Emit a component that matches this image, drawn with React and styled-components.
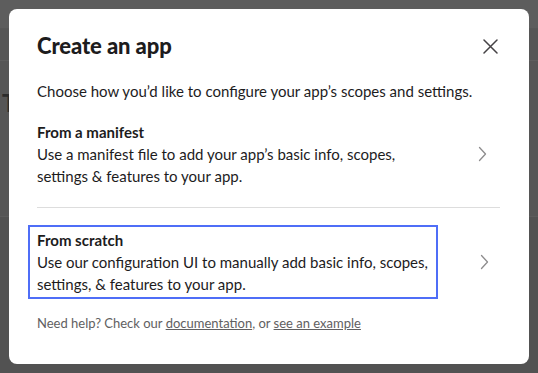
import styled, { createGlobalStyle } from 'styled-components'

const GlobalStyle = createGlobalStyle`
  html, body {
    margin: 0;
    padding: 0;
  }
  body {
    width: 538px;
    height: 373px;
    overflow: hidden;
    font-family: Lato, "Liberation Sans", sans-serif;
    -webkit-font-smoothing: antialiased;
  }
`

// BACKDROP (the dimmed page behind the dialog)

const Page = styled.div`
  position: relative;
  width: 538px;
  height: 373px;
  background: #4f4f4f;
  display: flex;
  flex-direction: column;
`

const TopBar = styled.div`
  height: 28px;
  background: #5d5d5d;
  border-bottom: 1px solid #575757;
`

const SubBar = styled.div`
  height: 31px;
  background: #565656;
  border-bottom: 1px solid #5e5e5e;
`

const PageBody = styled.div`
  height: 127px;
  background: #565656;
  border-bottom: 1px solid #5c5c5c;
  padding: 28px 0 0 2px;
  font-size: 24px;
  font-weight: 700;
  color: #2c2c2c;
  line-height: 28px;
`

const PageRest = styled.div`
  flex: 1;
  background: #525252;
`

// DIALOG

const Dialog = styled.div`
  position: absolute;
  left: 9px;
  top: 9px;
  width: 520px;
  height: 355px;
  box-sizing: border-box;
  background: #fff;
  border-radius: 8px;
  padding: 20px 28px 0 28px;
  color: #1d1c1d;
  display: flex;
  flex-direction: column;
`

const Header = styled.div`
  display: flex;
  align-items: center;
  justify-content: space-between;
  height: 34px;
`

const Title = styled.h1`
  margin: 0;
  font-size: 22px;
  font-weight: 900;
  line-height: 34px;
  letter-spacing: -0.1px;
`

const CloseButton = styled.button`
  width: 20px;
  height: 20px;
  border: 0;
  background: none;
  padding: 0;
  margin-right: 1px;
  display: flex;
  align-items: center;
  justify-content: center;
  color: #454245;
`

const Lead = styled.p`
  margin: 17px 0 0 0;
  font-size: 15px;
  line-height: 22px;
`

const Options = styled.div`
  margin-top: 12px;
  display: flex;
  flex-direction: column;
`

const Option = styled.div`
  display: flex;
  align-items: center;
  justify-content: space-between;
  margin: ${({ $focused }) => ($focused ? '17px 0 0 -9px' : '0')};
  width: ${({ $focused }) => ($focused ? '410px' : 'auto')};
  box-sizing: border-box;
  border: ${({ $focused }) => ($focused ? '2px solid #4f6ef7' : '0')};
  padding: ${({ $focused }) => ($focused ? '2px 8px 2px 7px' : '7px 8px 7px 0')};
  position: relative;
`

const OptionText = styled.div`
  display: flex;
  flex-direction: column;
  max-width: 410px;
`

const OptionTitle = styled.div`
  font-size: 15px;
  font-weight: 700;
  line-height: 22px;
`

const OptionDesc = styled.div`
  font-size: 15px;
  line-height: 22px;
`

const Chevron = styled.span`
  position: absolute;
  left: ${({ $focused }) => ($focused ? '450px' : '441px')};
  top: 50%;
  margin-top: -8px;
  width: 9px;
  height: 16px;
  color: #8d8c8d;
  display: flex;
`

const Divider = styled.hr`
  margin: 13px 0 0 0;
  border: 0;
  border-top: 1px solid #dddddd;
  width: 463px;
`

const Footer = styled.p`
  margin: 15px 0 0 0;
  font-size: 13px;
  line-height: 18px;
  color: #616061;

  a {
    color: #616061;
    text-decoration: underline;
  }
`

function ChevronIcon() {
  return (
    <svg width="9" height="16" viewBox="0 0 9 16" fill="none">
      <path d="M1.5 1.5 L7.5 8 L1.5 14.5" stroke="currentColor" strokeWidth="1.3" strokeLinecap="round" strokeLinejoin="round" />
    </svg>
  )
}

function CloseIcon() {
  return (
    <svg width="15" height="15" viewBox="0 0 15 15" fill="none">
      <path d="M1 1 L14 14 M14 1 L1 14" stroke="currentColor" strokeWidth="1.5" strokeLinecap="round" />
    </svg>
  )
}

export default function App() {
  return (
    <>
      <GlobalStyle />
      <Page>
        <TopBar />
        <SubBar />
        <PageBody>T</PageBody>
        <PageRest />

        <Dialog role="dialog" aria-label="Create an app">
          <Header>
            <Title>Create an app</Title>
            <CloseButton aria-label="Close">
              <CloseIcon />
            </CloseButton>
          </Header>
          <Lead>Choose how you’d like to configure your app’s scopes and settings.</Lead>
          <Options>
            <Option>
              <OptionText>
                <OptionTitle>From a manifest</OptionTitle>
                <OptionDesc>
                  Use a manifest file to add your app’s basic info, scopes, settings &amp; features to your app.
                </OptionDesc>
              </OptionText>
              <Chevron>
                <ChevronIcon />
              </Chevron>
            </Option>
            <Divider />
            <Option $focused>
              <OptionText>
                <OptionTitle>From scratch</OptionTitle>
                <OptionDesc>
                  Use our configuration UI to manually add basic info, scopes, settings, &amp; features to your app.
                </OptionDesc>
              </OptionText>
              <Chevron $focused>
                <ChevronIcon />
              </Chevron>
            </Option>
          </Options>
          <Footer>
            Need help? Check our <a href="#">documentation</a>, or <a href="#">see an example</a>
          </Footer>
        </Dialog>
      </Page>
    </>
  )
}
